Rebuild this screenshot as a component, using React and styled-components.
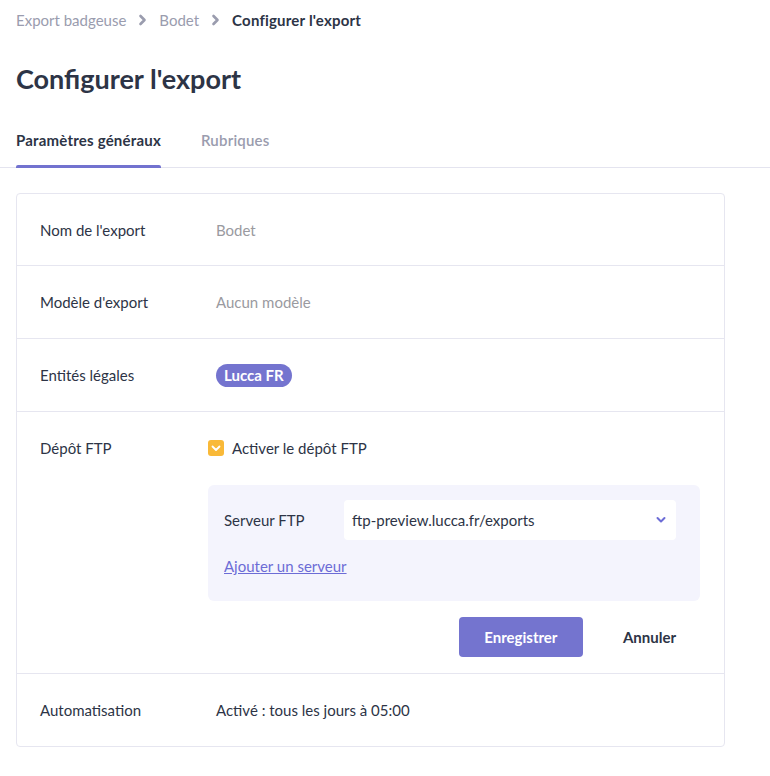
import React from "react";
import styled, { createGlobalStyle } from "styled-components";

const GlobalStyle = createGlobalStyle`
  body {
    margin: 0;
    background: #fff;
    font-family: "Lato", "Noto Sans", sans-serif;
    color: #2d3446;
  }
`;

const Page = styled.div`
  width: 770px;
`;

const Breadcrumb = styled.nav`
  display: flex;
  align-items: center;
  gap: 12px;
  padding: 10px 16px 0;
  height: 20px;
  font-size: 15px;
`;

const Crumb = styled.span`
  color: ${(p) => (p.$current ? "#2d3446" : "#9a9cae")};
  font-weight: ${(p) => (p.$current ? 700 : 400)};
  letter-spacing: ${(p) => (p.$current ? "0.2px" : "0")};
`;

const Title = styled.h1`
  margin: 0;
  padding: 31px 16px 0;
  font-size: 27px;
  line-height: 36px;
  font-weight: 700;
  color: #2d3446;
`;

const Tabs = styled.div`
  display: flex;
  gap: 40px;
  margin-top: 33px;
  padding: 0 16px;
  border-bottom: 1px solid #e4e4ef;
`;

const Tab = styled.div`
  position: relative;
  padding-bottom: 17px;
  font-size: 15px;
  line-height: 20px;
  letter-spacing: 0.2px;
  font-weight: ${(p) => (p.$active ? 700 : 600)};
  color: ${(p) => (p.$active ? "#2d3446" : "#9a9cae")};

  &::after {
    content: "";
    display: ${(p) => (p.$active ? "block" : "none")};
    position: absolute;
    left: 0;
    right: 0;
    bottom: -1px;
    height: 3px;
    border-radius: 2px 2px 0 0;
    background: #7272cf;
  }
`;

const Card = styled.section`
  margin: 25px 0 0 16px;
  width: 707px;
  border: 1px solid #e6e6f0;
  border-radius: 4px;
`;

const Row = styled.div`
  display: grid;
  grid-template-columns: 176px 1fr;
  align-items: ${(p) => (p.$top ? "start" : "center")};
  min-height: ${(p) => (p.$first ? "71px" : "72px")};
  padding: 0 24px 0 23px;
  border-top: ${(p) => (p.$first ? "none" : "1px solid #e6e6f0")};
  font-size: 15px;
`;

const Label = styled.div`
  color: #2d3446;
  line-height: 20px;
  ${(p) => p.$top && "padding-top: 26px;"}
`;

const Value = styled.div`
  color: ${(p) => (p.$muted ? "#9a9a9f" : "#2d3446")};
  line-height: 20px;
`;

const Tag = styled.span`
  display: inline-block;
  background: #7474cf;
  color: #fff;
  font-weight: 700;
  font-size: 15px;
  line-height: 23px;
  padding: 0 8px;
  border-radius: 12px;
`;

const FtpBlock = styled.div`
  display: flex;
  flex-direction: column;
  margin-left: -8px;
  padding: 26px 0 16px;
`;

const CheckRow = styled.label`
  display: flex;
  align-items: center;
  gap: 8px;
  line-height: 20px;
  color: #2d3446;
`;

const Checkbox = styled.span`
  width: 16px;
  height: 16px;
  border-radius: 3px;
  background: #f9b938;
  display: flex;
  align-items: center;
  justify-content: center;
`;

const Panel = styled.div`
  margin-top: 27px;
  background: #f4f4fd;
  border-radius: 6px;
  padding: 15px 24px 25px 16px;
  display: flex;
  flex-direction: column;
  gap: 16px;
`;

const Field = styled.div`
  display: flex;
  align-items: center;
`;

const FieldLabel = styled.span`
  width: 120px;
  color: #2d3446;
`;

const Select = styled.div`
  flex: 1;
  height: 40px;
  background: #fff;
  border-radius: 4px;
  display: flex;
  align-items: center;
  justify-content: space-between;
  padding: 0 10px 0 8px;
  color: #2d3446;
`;

const Link = styled.a`
  color: #6c6cd6;
  text-decoration: underline;
  align-self: flex-start;
  line-height: 20px;
  cursor: pointer;
`;

const Actions = styled.div`
  display: flex;
  justify-content: flex-end;
  align-items: center;
  gap: 16px;
  margin-top: 16px;
`;

const Button = styled.button`
  font-family: inherit;
  font-size: 15px;
  font-weight: 700;
  height: 40px;
  border: none;
  border-radius: 4px;
  padding: 0 24px;
  background: ${(p) => (p.$primary ? "#7474cf" : "transparent")};
  color: ${(p) => (p.$primary ? "#fff" : "#2d3446")};
  width: ${(p) => (p.$primary ? "124px" : "auto")};
`;

const Chevron = ({ color = "#9a9cae" }) => (
  <svg width="9" height="12" viewBox="0 0 9 12">
    <path d="M2.5 2l4 4-4 4" fill="none" stroke={color} strokeWidth="2.6" strokeLinecap="round" strokeLinejoin="round" />
  </svg>
);

export default function App() {
  return (
    <Page>
      <GlobalStyle />
      <Breadcrumb>
        <Crumb>Export badgeuse</Crumb>
        <Chevron />
        <Crumb>Bodet</Crumb>
        <Chevron />
        <Crumb $current>Configurer l'export</Crumb>
      </Breadcrumb>
      <Title>Configurer l'export</Title>
      <Tabs>
        <Tab $active>Paramètres généraux</Tab>
        <Tab>Rubriques</Tab>
      </Tabs>
      <Card>
        <Row $first>
          <Label>Nom de l'export</Label>
          <Value $muted>Bodet</Value>
        </Row>
        <Row>
          <Label>Modèle d'export</Label>
          <Value $muted>Aucun modèle</Value>
        </Row>
        <Row>
          <Label>Entités légales</Label>
          <Value>
            <Tag>Lucca FR</Tag>
          </Value>
        </Row>
        <Row $top>
          <Label $top>Dépôt FTP</Label>
          <FtpBlock>
            <CheckRow>
              <Checkbox>
                <svg width="10" height="8" viewBox="0 0 10 8">
                  <path d="M1.5 2.5l3.5 3.5 3.5-3.5" fill="none" stroke="#fff" strokeWidth="1.8" strokeLinecap="round" strokeLinejoin="round" />
                </svg>
              </Checkbox>
              Activer le dépôt FTP
            </CheckRow>
            <Panel>
              <Field>
                <FieldLabel>Serveur FTP</FieldLabel>
                <Select>
                  ftp-preview.lucca.fr/exports
                  <svg width="10" height="8" viewBox="0 0 10 8">
                    <path d="M1.5 2l3.5 3.5 3.5-3.5" fill="none" stroke="#6c6cd6" strokeWidth="2" strokeLinecap="round" strokeLinejoin="round" />
                  </svg>
                </Select>
              </Field>
              <Link>Ajouter un serveur</Link>
            </Panel>
            <Actions>
              <Button $primary>Enregistrer</Button>
              <Button>Annuler</Button>
            </Actions>
          </FtpBlock>
        </Row>
        <Row>
          <Label>Automatisation</Label>
          <Value>Activé : tous les jours à 05:00</Value>
        </Row>
      </Card>
    </Page>
  );
}
